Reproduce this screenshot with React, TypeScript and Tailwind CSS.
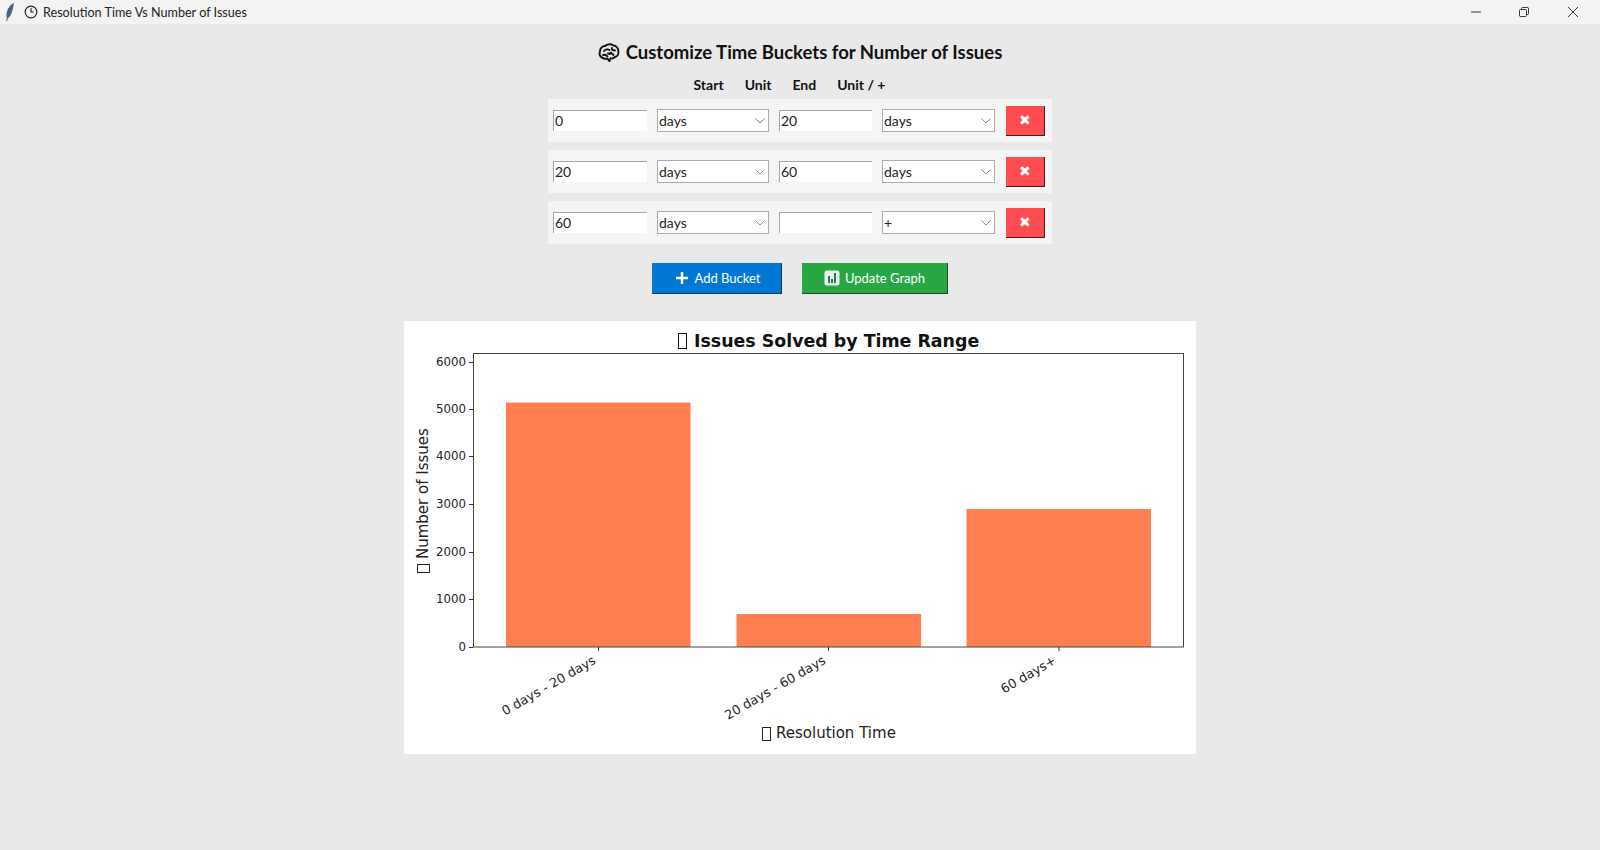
import { Clock3 } from 'lucide-react';

const font = { sans: 'font-["Lato",sans-serif]' };

type Bucket = { start: string; startUnit: string; end: string; endUnit: string };

const buckets: Bucket[] = [
    { start: '0', startUnit: 'days', end: '20', endUnit: 'days' },
    { start: '20', startUnit: 'days', end: '60', endUnit: 'days' },
    { start: '60', startUnit: 'days', end: '', endUnit: '+' },
];

const yTicks = [
    { label: '6000', y: 41 },
    { label: '5000', y: 88 },
    { label: '4000', y: 135.5 },
    { label: '3000', y: 183 },
    { label: '2000', y: 231 },
    { label: '1000', y: 278 },
    { label: '0', y: 326 },
];

const bars = [
    { x: 102, top: 81.5, label: '0 days - 20 days', tick: 194.5 },
    { x: 332.5, top: 293, label: '20 days - 60 days', tick: 424.5 },
    { x: 562.5, top: 188, label: '60 days+', tick: 655 },
];

const Feather = () => (
    <svg width="10" height="20" viewBox="0 0 10 20" className="ml-[5px]">
        <path d="M9 1C5 3 2 7 1.5 12c-.2 2 0 3 .5 4l-1 3 1 .3 1-3C6 14 8 8 9 1z" fill="#4a6285" />
    </svg>
);

const TitleBar = () => (
    <div className="flex h-6 items-center bg-[#f3f3f3]">
        <Feather />
        <Clock3 className="ml-[9px] h-[14px] w-[14px] text-[#222]" strokeWidth={2} />
        <span className="ml-[5px] pt-[2px] text-[12.600px] text-[#222]">Resolution Time Vs Number of Issues</span>
        <div className="ml-auto flex items-center text-[#333]">
            <svg width="12" height="12" viewBox="0 0 12 12" className="mr-[36px]"><path d="M1 6h10" stroke="currentColor" strokeWidth="1" /></svg>
            <svg width="12" height="12" viewBox="0 0 12 12" className="mr-[37px]" fill="none" stroke="currentColor"><rect x="1.5" y="3.5" width="7" height="7" rx="1" /><path d="M3.5 3.5V2.5a1 1 0 0 1 1-1h5a1 1 0 0 1 1 1v5a1 1 0 0 1-1 1h-1" /></svg>
            <svg width="12" height="12" viewBox="0 0 12 12" className="mr-[21px]" fill="none" stroke="currentColor"><path d="M1 1l10 10M11 1L1 11" /></svg>
        </div>
    </div>
);

const BrainIcon = () => (
    <svg width="22" height="20" viewBox="0 0 22 20" fill="none" stroke="#111" strokeWidth="1.9" strokeLinecap="round" strokeLinejoin="round" className="mr-[6px]">
        <path d="M4 14.5C1.5 13.5 1 10.5 2 8.5 2 5 4.5 3 7 3c2-2 6-2.2 8-.8 3 .2 5.5 3 5.3 6 .7 2.500-.6 5.300-3.300 5.800-1.500 1.700-3.500 1.500-4.500 1.200l-1 3-2-2.600C7.500 16 5.500 16 4 14.500z" />
        <path d="M6 8c1.500-2 4-2 5.500-1M14 5c-.5 1.500.5 2.500 3 2.500M5 12c2-.5 3.500 0 4.500 1.500M10 10.500c2-.5 4.500-.5 5.500 1.500M13 9.500l-1.500 1.500" />
    </svg>
);

const Cell = ({ value, w }: { value: string; w: string }) => (
    <input readOnly value={value} className={`${w} block h-[21px] border-t border-l border-[#a5a5a5] bg-white pb-[2px] pl-[1px] text-[14px] text-[#222] outline-none`} />
);

const Combo = ({ value, w }: { value: string; w: string }) => (
    <div className={`${w} flex h-[23px] items-center justify-between border border-[#ababab] bg-white pl-[1px] pr-[3px] text-[14px] text-[#222]`}>
        <span>{value}</span>
        <svg width="10" height="6" viewBox="0 0 10 6" fill="none" stroke="#888"><path d="M.5.5 5 5 9.500.5" /></svg>
    </div>
);

const Row = ({ bucket }: { bucket: Bucket }) => (
    <div className="flex h-[43px] w-[504px] items-center bg-[#f5f5f5] pl-[5px]">
        <Cell value={bucket.start} w="w-[94px]" />
        <div className="ml-[10px]"><Combo value={bucket.startUnit} w="w-[112px]" /></div>
        <div className="ml-[10px]"><Cell value={bucket.end} w="w-[93px]" /></div>
        <div className="ml-[10px]"><Combo value={bucket.endUnit} w="w-[113px]" /></div>
        <button className="ml-[11px] flex h-[30px] w-[39px] items-center justify-center border-r border-b border-[#3a2020] bg-[#ff4c50] pb-[1px] text-[14px] text-white">✖</button>
    </div>
);

const Chart = () => (
    <svg width="792" height="433" viewBox="0 0 792 433" className="block" style={{ fontFamily: '"DejaVu Sans", sans-serif' }}>
        {bars.map((bar) => (
            <rect key={bar.label} x={bar.x} y={bar.top} width="184.500" height={326 - bar.top} fill="#ff7f50" />
        ))}
        <rect x="69.500" y="32.500" width="710" height="293.500" fill="none" stroke="#444" />
        {yTicks.map((tick) => (
            <g key={tick.label}>
                <path d={`M65 ${Math.floor(tick.y) + 0.5}H69`} stroke="#333" />
                <text x="62" y={tick.y + 3.5} textAnchor="end" fontSize="11.800" fill="#222">{tick.label}</text>
            </g>
        ))}
        {bars.map((bar) => (
            <g key={bar.label}>
                <path d={`M${bar.tick} 326v4`} stroke="#333" />
                <text transform={`translate(${bar.tick - 2} 342) rotate(-30)`} textAnchor="end" fontSize="12.800" fill="#222">{bar.label}</text>
            </g>
        ))}
        <rect x="274.500" y="12.500" width="8" height="15" fill="none" stroke="#111" />
        <text x="290" y="26" fontSize="17.400" fontWeight="700" fill="#111">Issues Solved by Time Range</text>
        <rect x="358.500" y="406.500" width="8" height="13" fill="none" stroke="#222" />
        <text x="372" y="417" fontSize="15" fill="#222">Resolution Time</text>
        <rect x="13.500" y="243.500" width="12" height="8" fill="none" stroke="#222" />
        <text transform="translate(24 238) rotate(-90)" fontSize="15" fill="#222">Number of Issues</text>
    </svg>
);

export default function App() {
    return (
        <div className={`${font.sans} min-h-screen w-full overflow-hidden bg-[#e9e9e9]`}>
            <TitleBar />
            <div className="flex flex-col items-center">
                <h1 className="mt-[17px] flex h-[24px] items-center text-[18.500px] font-bold text-[#111]">
                    <BrainIcon />
                    Customize Time Buckets for Number of Issues
                </h1>
                <div className="mt-[9px] flex h-[20px] items-center gap-[21px] pr-[21px] text-[14px] font-bold text-[#111]">
                    <span>Start</span>
                    <span>Unit</span>
                    <span>End</span>
                    <span>Unit / +</span>
                </div>
                <div className="mt-[5px] flex flex-col gap-2">
                    {buckets.map((bucket, index) => <Row key={index} bucket={bucket} />)}
                </div>
                <div className="mt-[19px] flex gap-5 text-[13px] text-white">
                    <button className="flex h-[31px] w-[130px] items-center justify-center border-r border-b border-[#123a5c] bg-[#0078d4] pl-[2px]">
                        <svg width="14" height="14" viewBox="0 0 14 14" className="mr-[6px]"><path d="M7 1v12M1 7h12" stroke="#fff" strokeWidth="2.500" /></svg>
                        <span className="pt-[2px]">Add Bucket</span>
                    </button>
                    <button className="flex h-[31px] w-[146px] items-center justify-center border-r border-b border-[#1a4a28] bg-[#28a745]">
                        <svg width="16" height="16" viewBox="0 0 16 16" className="mr-[5px]"><rect x=".5" y=".5" width="15" height="15" rx="2" fill="#e8f4ec" /><path d="M4 6v7h2V6zM7 9v4h2V9zM10 3v10h2V3z" fill="#2b7a4a" /></svg>
                        <span className="pt-[2px]">Update Graph</span>
                    </button>
                </div>
                <div className="mt-[27px] bg-white">
                    <Chart />
                </div>
            </div>
        </div>
    );
}
